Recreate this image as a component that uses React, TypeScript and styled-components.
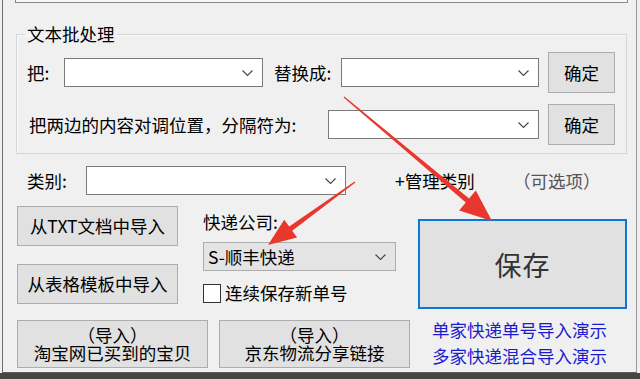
import React from 'react'
import styled, { createGlobalStyle } from 'styled-components'

const GlobalStyle = createGlobalStyle`
    html, body {
        margin: 0;
        padding: 0;
        background: #f0f0f0;
    }
    body {
        font-family: "Noto Sans CJK SC", "Microsoft YaHei", sans-serif;
        font-size: 17.5px;
        color: #000;
    }
`

const Page = styled.div`
    position: relative;
    width: 640px;
    height: 379px;
    overflow: hidden;
    background: #f0f0f0;
`

const Window = styled.div`
    box-sizing: border-box;
    width: 635px;
    height: 373px;
    margin-left: 2px;
    background: #f0f0f0;
    border-left: 1px solid #6b6b6b;
    border-right: 1px solid #9a9a9a;
    border-bottom: 1px solid #5a5a5a;
`

const BottomStrip = styled.div`
    height: 6px;
    background: #4a4542;
`

const TopBox = styled.div`
    box-sizing: border-box;
    width: 613px;
    height: 3px;
    margin-left: 12px;
    background: #f7f7f7;
    border: 1px solid #8a8a8a;
    border-top: none;
`

const GroupBox = styled.fieldset`
    box-sizing: border-box;
    width: 611px;
    margin: 21px 0 0 13px;
    padding: 8px 11px 8px 10px;
    border: 1px solid #d6d6d6;
    box-shadow: inset 1px 1px 0 #fbfbfb;
    min-width: 0;
    legend {
        padding: 0 2px;
        margin-left: -2px;
        line-height: 20px;
    }
`

const Row = styled.div<{ $gap?: number; $pl?: number }>`
    display: flex;
    align-items: center;
    margin-top: ${p => p.$gap ?? 0}px;
    padding-left: ${p => p.$pl ?? 0}px;
`

const Label = styled.span<{ $w: number; $ml?: number; $pl?: number; $color?: string }>`
    box-sizing: border-box;
    flex: none;
    width: ${p => p.$w}px;
    margin-left: ${p => p.$ml ?? 0}px;
    padding-left: ${p => p.$pl ?? 0}px;
    color: ${p => p.$color ?? '#000'};
    white-space: nowrap;
    line-height: 22px;
`

const Combo = styled.div<{ $w: number; $flat?: boolean }>`
    box-sizing: border-box;
    flex: none;
    width: ${p => p.$w}px;
    height: 29px;
    display: flex;
    align-items: center;
    justify-content: space-between;
    padding: 0 9px 0 4px;
    background: ${p => (p.$flat ? '#e4e4e4' : '#fff')};
    border: 1px solid ${p => (p.$flat ? '#adadad' : '#7a7a7a')};
    line-height: 22px;
    white-space: nowrap;
`

const Button = styled.button<{ $w: number; $h: number; $ml?: number }>`
    box-sizing: border-box;
    flex: none;
    width: ${p => p.$w}px;
    height: ${p => p.$h}px;
    margin-left: ${p => p.$ml ?? 0}px;
    padding: 0;
    background: #e1e1e1;
    border: 1px solid #adadad;
    font: inherit;
    color: #000;
    line-height: 18px;
`

const Main = styled.div`
    display: flex;
    margin: 11px 0 0 14px;
`

const LeftBlock = styled.div`
    width: 393px;
`

const TopArea = styled.div`
    display: flex;
    height: 98px;
`

const ButtonCol = styled.div`
    display: flex;
    flex-direction: column;
    gap: 18px;
`

const MiddleCol = styled.div`
    margin-left: 25px;
    display: flex;
    flex-direction: column;
`

const CompanyLabel = styled.div`
    height: 38px;
    padding-top: 5px;
    box-sizing: border-box;
    line-height: 22px;
`

const CheckRow = styled.label`
    display: flex;
    align-items: center;
    gap: 4px;
    margin-top: 11px;
    line-height: 22px;
`

const CheckBox = styled.span`
    box-sizing: border-box;
    width: 18px;
    height: 19px;
    background: #fff;
    border: 1px solid #333;
`

const BottomButtons = styled.div`
    display: flex;
    gap: 11px;
    margin-top: 16px;
`

const RightBlock = styled.div`
    margin-left: 8px;
    padding-top: 13px;
`

const SaveButton = styled.button`
    box-sizing: border-box;
    width: 209px;
    height: 90px;
    padding: 0;
    background: #e1e1e1;
    border: 2px solid #0a78d4;
    font: inherit;
    font-size: 27px;
    color: #333;
    letter-spacing: 1px;
`

const Links = styled.div`
    margin-top: 8px;
    padding-left: 14px;
    display: flex;
    flex-direction: column;
`

const DemoLink = styled.a`
    color: #1c1ccf;
    line-height: 26px;
    text-decoration: none;
`

const Overlay = styled.svg`
    position: absolute;
    left: 0;
    top: 0;
    pointer-events: none;
`

const Chevron = () => (
    <svg width='11' height='6' viewBox='0 0 11 6'>
        <polyline points='0.5,0.5 5.5,5.5 10.5,0.5' fill='none' stroke='#444' strokeWidth='1.1' />
    </svg>
)

// red arrow: tapered shaft plus head, from start to tip
const arrowPoints = (sx: number, sy: number, tx: number, ty: number, head: number, half: number) => {
    const dx = tx - sx
    const dy = ty - sy
    const len = Math.hypot(dx, dy)
    const ux = dx / len
    const uy = dy / len
    const nx = -uy
    const ny = ux
    const bx = tx - head * ux
    const by = ty - head * uy
    const pts = [
        [sx + nx * 0.6, sy + ny * 0.6],
        [bx + nx * 2.6, by + ny * 2.6],
        [bx + nx * half, by + ny * half],
        [tx, ty],
        [bx - nx * half, by - ny * half],
        [bx - nx * 2.6, by - ny * 2.6],
        [sx - nx * 0.6, sy - ny * 0.6],
    ]
    return pts.map(p => p.map(v => v.toFixed(1)).join(',')).join(' ')
}

const App = () => {
    return (
        <Page>
            <GlobalStyle />
            <Window>
                <TopBox />
                <GroupBox>
                    <legend>文本批处理</legend>
                    <Row>
                        <Label $w={37}>把:</Label>
                        <Combo $w={199}>
                            <span />
                            <Chevron />
                        </Combo>
                        <Label $w={67} $ml={11}>替换成:</Label>
                        <Combo $w={198}>
                            <span />
                            <Chevron />
                        </Combo>
                        <Button $w={67} $h={41} $ml={9}>确定</Button>
                    </Row>
                    <Row $gap={11}>
                        <Label $w={301} $pl={2}>把两边的内容对调位置，分隔符为:</Label>
                        <Combo $w={211}>
                            <span />
                            <Chevron />
                        </Combo>
                        <Button $w={67} $h={41} $ml={9}>确定</Button>
                    </Row>
                </GroupBox>
                <Row $gap={12} $pl={24}>
                    <Label $w={59}>类别:</Label>
                    <Combo $w={260}>
                        <span />
                        <Chevron />
                    </Combo>
                    <Label $w={118} $ml={49}>+管理类别</Label>
                    <Label $w={90} $color='#555'>（可选项）</Label>
                </Row>
                <Main>
                    <LeftBlock>
                        <TopArea>
                            <ButtonCol>
                                <Button $w={161} $h={40}>从TXT文档中导入</Button>
                                <Button $w={161} $h={40}>从表格模板中导入</Button>
                            </ButtonCol>
                            <MiddleCol>
                                <CompanyLabel>快递公司:</CompanyLabel>
                                <Combo $w={193} $flat>
                                    <span>S-顺丰快递</span>
                                    <Chevron />
                                </Combo>
                                <CheckRow>
                                    <CheckBox />
                                    连续保存新单号
                                </CheckRow>
                            </MiddleCol>
                        </TopArea>
                        <BottomButtons>
                            <Button $w={191} $h={48}>
                                （导入）
                                <br />
                                淘宝网已买到的宝贝
                            </Button>
                            <Button $w={191} $h={48}>
                                （导入）
                                <br />
                                京东物流分享链接
                            </Button>
                        </BottomButtons>
                    </LeftBlock>
                    <RightBlock>
                        <SaveButton>保存</SaveButton>
                        <Links>
                            <DemoLink>单家快递单号导入演示</DemoLink>
                            <DemoLink>多家快递混合导入演示</DemoLink>
                        </Links>
                    </RightBlock>
                </Main>
            </Window>
            <BottomStrip />
            <Overlay width='640' height='379'>
                <polygon points={arrowPoints(344, 97, 492, 221, 32, 13)} fill='#e8382e' />
                <polygon points={arrowPoints(355, 182, 268, 245, 28, 11)} fill='#e8382e' />
            </Overlay>
        </Page>
    )
}

export default App
